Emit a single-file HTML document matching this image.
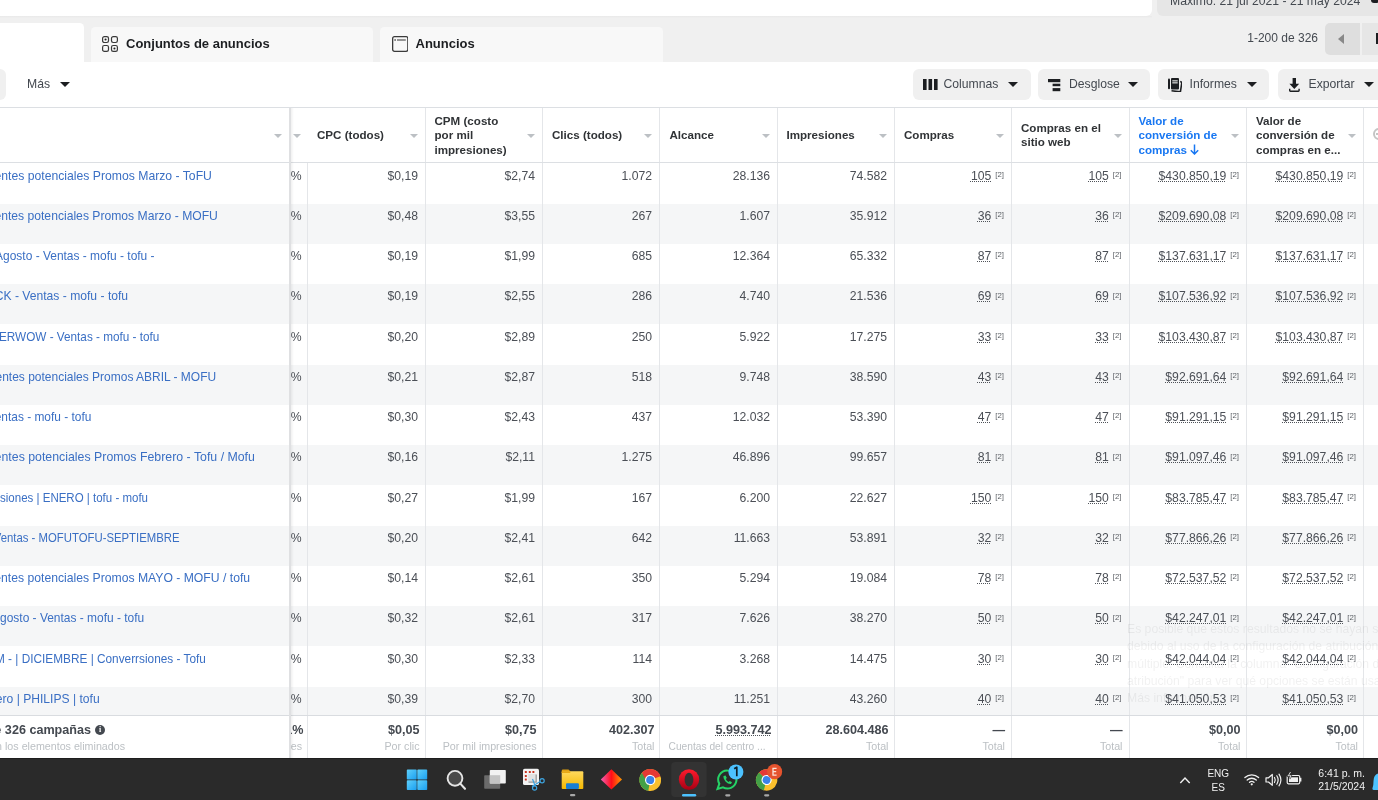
<!DOCTYPE html><html><head><meta charset="utf-8"><style>
*{box-sizing:border-box;margin:0;padding:0}
html,body{width:1378px;height:800px;overflow:hidden}
body{position:relative;background:#f0f0f0;font-family:"Liberation Sans",sans-serif;color:#1c1e21}
.a{position:absolute;white-space:nowrap}
.ln{position:absolute;width:1px;background:#e4e6e9}
.hl{position:absolute;height:1px;background:#dcdfe3;left:0;width:1378px}
.row{position:absolute;left:0;width:1378px}
.t{position:absolute;white-space:nowrap;font-size:12.2px;line-height:14px;color:#4b4f56}
.r{text-align:right}
.nm{color:#3a6fc4}
.u{text-decoration:underline dotted #50545a;text-underline-offset:0.6px;text-decoration-thickness:1px}
.sup{font-size:7.8px;color:#5c6066;margin-left:4px;position:relative;top:-2.8px}
.hd{position:absolute;white-space:nowrap;font-size:11.6px;line-height:14.3px;font-weight:bold;color:#303336}
.car{position:absolute;width:0;height:0;border-left:4px solid transparent;border-right:4px solid transparent;border-top:4.5px solid #bcc0c4}
.btn{position:absolute;top:69px;height:31px;background:#f0f0f0;border-radius:6px}
.bt{position:absolute;top:0;line-height:31px;font-size:12.2px;color:#444950}
.bc{position:absolute;width:0;height:0;border-left:5px solid transparent;border-right:5px solid transparent;border-top:5.5px solid #1c1e21;top:82px}
.ft{position:absolute;white-space:nowrap;text-align:right;font-weight:bold;font-size:12.6px;color:#444950}
.fs{position:absolute;white-space:nowrap;text-align:right;font-size:10.7px;color:#bcc0c4}
</style></head><body><div id="root" style="position:absolute;left:0;top:0;width:1378px;height:800px;overflow:hidden;filter:blur(0.3px)">
<div class="a" style="left:0;top:0;width:1152px;height:16px;background:#fff;border-bottom-right-radius:6px"></div>
<div class="a" style="left:1157px;top:-12px;width:240px;height:28px;background:#e6e6e6;border-radius:6px"></div>
<div class="a" style="left:1170px;top:-6.5px;font-size:12.2px;line-height:14px;color:#444950">Máximo: 21 jul 2021 - 21 may 2024</div>
<div class="a" style="left:1371px;top:-3px;width:8px;height:6px;background:#1c1e21;border-radius:3px"></div>
<div class="a" style="left:0;top:16px;width:1152px;height:2px;background:linear-gradient(#e9e9e9,#f0f0f0)"></div>
<div class="a" style="left:-10px;top:23px;width:94px;height:40px;background:#fff;border-top-right-radius:4.5px"></div>
<div class="a" style="left:91px;top:27px;width:282px;height:36px;background:#f8f8f8;border-top-left-radius:4.5px;border-top-right-radius:4.5px"></div>
<div class="a" style="left:380px;top:27px;width:283px;height:36px;background:#f8f8f8;border-top-left-radius:4.5px;border-top-right-radius:4.5px"></div>
<svg class="a" style="left:102px;top:36px" width="16" height="16" viewBox="0 0 16 16">
<g fill="none" stroke="#3a3a3a" stroke-width="1.2">
<rect x="0.6" y="0.6" width="5.9" height="5.9" rx="1.7"/><rect x="9.5" y="0.6" width="5.9" height="5.9" rx="1.7"/>
<rect x="0.6" y="9.5" width="5.9" height="5.9" rx="1.7"/><rect x="9.5" y="9.5" width="5.9" height="5.9" rx="1.7"/></g>
<circle cx="3.55" cy="3.55" r="1.05" fill="#222"/><circle cx="12.45" cy="12.45" r="1.05" fill="#222"/></svg>
<div class="a" style="left:126px;top:36px;font-size:13px;line-height:16px;font-weight:bold;color:#1c1e21">Conjuntos de anuncios</div>
<svg class="a" style="left:391.5px;top:36px" width="16.5" height="16" viewBox="0 0 16.5 16">
<rect x="0.65" y="0.65" width="15.2" height="14.7" rx="1.8" fill="none" stroke="#3a3a3a" stroke-width="1.3"/>
<rect x="2.4" y="3.3" width="1.4" height="1.4" fill="#333"/><rect x="5" y="3.4" width="8.8" height="1.2" fill="#555"/></svg>
<div class="a" style="left:415.5px;top:36px;font-size:13px;line-height:16px;font-weight:bold;color:#1c1e21">Anuncios</div>
<div class="a" style="left:1200px;width:118px;text-align:right;top:31px;font-size:12px;line-height:14px;color:#444950">1-200 de 326</div>
<div class="a" style="left:1324.5px;top:23px;width:35px;height:31.5px;background:#dedede;border-radius:5px 0 0 5px"></div>
<div class="a" style="left:1338px;top:34px;width:0;height:0;border-top:5px solid transparent;border-bottom:5px solid transparent;border-right:6px solid #888"></div>
<div class="a" style="left:1361.5px;top:23px;width:30px;height:31.5px;background:#e6e6e6"></div>
<div class="a" style="left:1376px;top:33px;width:4px;height:11px;background:#1c1e21"></div>
<div class="a" style="left:0;top:62px;width:1378px;height:697px;background:#fff"></div>
<div class="a" style="left:-20px;top:69px;width:26px;height:31px;background:#f0f0f0;border-radius:6px"></div>
<div class="a" style="left:27px;top:69px;line-height:31px;font-size:12.2px;color:#444950">Más</div>
<div class="bc" style="left:60px"></div>
<div class="btn" style="left:912.5px;width:118px"></div>
<svg class="a" style="left:922.5px;top:79px" width="15" height="11" viewBox="0 0 15 11"><rect x="0" y="0" width="3.6" height="11" fill="#1c1e21"/><rect x="5.5" y="0" width="3.6" height="11" fill="#1c1e21"/><rect x="11" y="0" width="3.6" height="11" fill="#1c1e21"/></svg>
<div class="a bt" style="left:943.5px;top:69px">Columnas</div>
<div class="bc" style="left:1008px"></div>
<div class="btn" style="left:1038px;width:111.5px"></div>
<svg class="a" style="left:1048px;top:78.5px" width="13" height="13" viewBox="0 0 13 13"><rect x="0" y="0" width="12.3" height="3.2" fill="#1c1e21"/><rect x="4.6" y="4.7" width="7.7" height="2.5" fill="#1c1e21"/><rect x="4.6" y="9.1" width="7.7" height="3.1" fill="#1c1e21"/></svg>
<div class="a bt" style="left:1069px;top:69px">Desglose</div>
<div class="bc" style="left:1128px"></div>
<div class="btn" style="left:1158px;width:110.5px"></div>
<svg class="a" style="left:1168px;top:77.5px" width="14" height="14.5" viewBox="0 0 14 14.5"><rect x="0" y="0.6" width="2" height="10.6" rx="1" fill="#1c1e21"/><rect x="3" y="0" width="8" height="11.6" rx="1" fill="#1c1e21"/><rect x="4.3" y="2.3" width="5.4" height="1.1" fill="#f0f0f0"/><rect x="4.3" y="4.3" width="5.4" height="1.1" fill="#f0f0f0"/><path d="M12.2 3.5 L13.9 4.2 L12.4 13.8 L3.5 12.8" fill="none" stroke="#1c1e21" stroke-width="1.6"/></svg>
<div class="a bt" style="left:1189.5px;top:69px">Informes</div>
<div class="bc" style="left:1247px"></div>
<div class="btn" style="left:1277.5px;width:130px"></div>
<svg class="a" style="left:1289px;top:78px" width="11" height="14" viewBox="0 0 11 14"><path d="M3.6 0 H7 V5.8 H10.2 L5.3 11 L0.4 5.8 H3.6 Z" fill="#1c1e21"/><path d="M0.7 10.8 V12.5 Q0.7 13.2 1.4 13.2 H9.4 Q10.1 13.2 10.1 12.5 V10.8" fill="none" stroke="#1c1e21" stroke-width="1.4"/></svg>
<div class="a bt" style="left:1308.5px;top:69px">Exportar</div>
<div class="bc" style="left:1363.5px"></div>
<div class="hl" style="top:107px"></div>
<div class="hl" style="top:162px"></div>
<div class="ln" style="left:425px;top:108px;height:54px"></div>
<div class="ln" style="left:542px;top:108px;height:54px"></div>
<div class="ln" style="left:659px;top:108px;height:54px"></div>
<div class="ln" style="left:777px;top:108px;height:54px"></div>
<div class="ln" style="left:894px;top:108px;height:54px"></div>
<div class="ln" style="left:1011px;top:108px;height:54px"></div>
<div class="ln" style="left:1129px;top:108px;height:54px"></div>
<div class="ln" style="left:1246px;top:108px;height:54px"></div>
<div class="ln" style="left:1363px;top:108px;height:54px"></div>
<div class="car" style="left:273.5px;top:133.5px"></div>
<div class="car" style="left:293px;top:133.5px"></div>
<div class="car" style="left:409.5px;top:133.5px"></div>
<div class="car" style="left:526.5px;top:133.5px"></div>
<div class="car" style="left:643.5px;top:133.5px"></div>
<div class="car" style="left:761.5px;top:133.5px"></div>
<div class="car" style="left:878.5px;top:133.5px"></div>
<div class="car" style="left:995.5px;top:133.5px"></div>
<div class="car" style="left:1113.5px;top:133.5px"></div>
<div class="car" style="left:1230.5px;top:133.5px"></div>
<div class="car" style="left:1347.5px;top:133.5px"></div>
<div class="hd" style="left:317px;top:128.35px">CPC (todos)</div>
<div class="hd" style="left:434.5px;top:114.05px">CPM (costo<br>por mil<br>impresiones)</div>
<div class="hd" style="left:552px;top:128.35px">Clics (todos)</div>
<div class="hd" style="left:669.5px;top:128.35px">Alcance</div>
<div class="hd" style="left:786.5px;top:128.35px">Impresiones</div>
<div class="hd" style="left:904px;top:128.35px">Compras</div>
<div class="hd" style="left:1021px;top:121.2px">Compras en el<br>sitio web</div>
<div class="hd" style="left:1138.5px;top:114.05px;color:#1877f2">Valor de<br>conversión de<br>compras <svg width="9" height="11" viewBox="0 0 9 11" style="vertical-align:-1px"><path d="M4.5 0.5 V10 M0.8 6.3 L4.5 10 L8.2 6.3" fill="none" stroke="#1877f2" stroke-width="1.5"/></svg></div>
<div class="hd" style="left:1256px;top:114.05px">Valor de<br>conversión de<br>compras en e...</div>
<div class="a" style="left:1373px;top:128px;width:12px;height:12px;border:2px solid #c4c4c4;border-radius:50%"></div><div class="a" style="left:1376px;top:133px;width:6px;height:2px;background:#c4c4c4"></div>
<div class="row" style="top:163.3px;height:40.25px;background:#fff"></div>
<div class="row" style="top:203.55px;height:40.25px;background:#f5f6f7"></div>
<div class="row" style="top:243.8px;height:40.25px;background:#fff"></div>
<div class="row" style="top:284.05px;height:40.25px;background:#f5f6f7"></div>
<div class="row" style="top:324.3px;height:40.25px;background:#fff"></div>
<div class="row" style="top:364.55px;height:40.25px;background:#f5f6f7"></div>
<div class="row" style="top:404.8px;height:40.25px;background:#fff"></div>
<div class="row" style="top:445.05px;height:40.25px;background:#f5f6f7"></div>
<div class="row" style="top:485.3px;height:40.25px;background:#fff"></div>
<div class="row" style="top:525.55px;height:40.25px;background:#f5f6f7"></div>
<div class="row" style="top:565.8px;height:40.25px;background:#fff"></div>
<div class="row" style="top:606.05px;height:40.25px;background:#f5f6f7"></div>
<div class="row" style="top:646.3px;height:40.25px;background:#fff"></div>
<div class="row" style="top:686.55px;height:28.450000000000045px;background:#f5f6f7"></div>
<div class="ln" style="left:307px;top:163px;height:552px"></div>
<div class="ln" style="left:425px;top:163px;height:596px"></div>
<div class="ln" style="left:542px;top:163px;height:596px"></div>
<div class="ln" style="left:659px;top:163px;height:596px"></div>
<div class="ln" style="left:777px;top:163px;height:596px"></div>
<div class="ln" style="left:894px;top:163px;height:596px"></div>
<div class="ln" style="left:1011px;top:163px;height:596px"></div>
<div class="ln" style="left:1129px;top:163px;height:596px"></div>
<div class="ln" style="left:1246px;top:163px;height:596px"></div>
<div class="ln" style="left:1363px;top:163px;height:596px"></div>
<div class="t nm" style="right:1166.10px;top:168.70000000000002px;transform:scaleX(1.001);transform-origin:right center">ientes potenciales Promos Marzo - ToFU</div>
<div class="a" style="left:291px;width:16px;top:163.3px;height:30px;overflow:hidden"><div class="t" style="right:5.5px;top:5.4px">4%</div></div>
<div class="t r" style="right:960px;top:168.70000000000002px">$0,19</div>
<div class="t r" style="right:843px;top:168.70000000000002px">$2,74</div>
<div class="t r" style="right:726px;top:168.70000000000002px">1.072</div>
<div class="t r" style="right:608px;top:168.70000000000002px">28.136</div>
<div class="t r" style="right:491px;top:168.70000000000002px">74.582</div>
<div class="t r" style="right:374px;top:168.70000000000002px"><span class="u">105</span><span class="sup">[2]</span></div>
<div class="t r" style="right:256.5px;top:168.70000000000002px"><span class="u">105</span><span class="sup">[2]</span></div>
<div class="t r" style="right:139px;top:168.70000000000002px"><span class="u">$430.850,19</span><span class="sup">[2]</span></div>
<div class="t r" style="right:22px;top:168.70000000000002px"><span class="u">$430.850,19</span><span class="sup">[2]</span></div>
<div class="t nm" style="right:1160.10px;top:208.95000000000002px;transform:scaleX(0.997);transform-origin:right center">ientes potenciales Promos Marzo - MOFU</div>
<div class="a" style="left:291px;width:16px;top:203.55px;height:30px;overflow:hidden"><div class="t" style="right:5.5px;top:5.4px">4%</div></div>
<div class="t r" style="right:960px;top:208.95000000000002px">$0,48</div>
<div class="t r" style="right:843px;top:208.95000000000002px">$3,55</div>
<div class="t r" style="right:726px;top:208.95000000000002px">267</div>
<div class="t r" style="right:608px;top:208.95000000000002px">1.607</div>
<div class="t r" style="right:491px;top:208.95000000000002px">35.912</div>
<div class="t r" style="right:374px;top:208.95000000000002px"><span class="u">36</span><span class="sup">[2]</span></div>
<div class="t r" style="right:256.5px;top:208.95000000000002px"><span class="u">36</span><span class="sup">[2]</span></div>
<div class="t r" style="right:139px;top:208.95000000000002px"><span class="u">$209.690,08</span><span class="sup">[2]</span></div>
<div class="t r" style="right:22px;top:208.95000000000002px"><span class="u">$209.690,08</span><span class="sup">[2]</span></div>
<div class="t nm" style="right:1223.14px;top:249.20000000000002px;transform:scaleX(0.981);transform-origin:right center">Agosto - Ventas - mofu - tofu -</div>
<div class="a" style="left:291px;width:16px;top:243.8px;height:30px;overflow:hidden"><div class="t" style="right:5.5px;top:5.4px">5%</div></div>
<div class="t r" style="right:960px;top:249.20000000000002px">$0,19</div>
<div class="t r" style="right:843px;top:249.20000000000002px">$1,99</div>
<div class="t r" style="right:726px;top:249.20000000000002px">685</div>
<div class="t r" style="right:608px;top:249.20000000000002px">12.364</div>
<div class="t r" style="right:491px;top:249.20000000000002px">65.332</div>
<div class="t r" style="right:374px;top:249.20000000000002px"><span class="u">87</span><span class="sup">[2]</span></div>
<div class="t r" style="right:256.5px;top:249.20000000000002px"><span class="u">87</span><span class="sup">[2]</span></div>
<div class="t r" style="right:139px;top:249.20000000000002px"><span class="u">$137.631,17</span><span class="sup">[2]</span></div>
<div class="t r" style="right:22px;top:249.20000000000002px"><span class="u">$137.631,17</span><span class="sup">[2]</span></div>
<div class="t nm" style="right:1249.43px;top:289.45px;transform:scaleX(0.995);transform-origin:right center">CK - Ventas - mofu - tofu</div>
<div class="a" style="left:291px;width:16px;top:284.05px;height:30px;overflow:hidden"><div class="t" style="right:5.5px;top:5.4px">3%</div></div>
<div class="t r" style="right:960px;top:289.45px">$0,19</div>
<div class="t r" style="right:843px;top:289.45px">$2,55</div>
<div class="t r" style="right:726px;top:289.45px">286</div>
<div class="t r" style="right:608px;top:289.45px">4.740</div>
<div class="t r" style="right:491px;top:289.45px">21.536</div>
<div class="t r" style="right:374px;top:289.45px"><span class="u">69</span><span class="sup">[2]</span></div>
<div class="t r" style="right:256.5px;top:289.45px"><span class="u">69</span><span class="sup">[2]</span></div>
<div class="t r" style="right:139px;top:289.45px"><span class="u">$107.536,92</span><span class="sup">[2]</span></div>
<div class="t r" style="right:22px;top:289.45px"><span class="u">$107.536,92</span><span class="sup">[2]</span></div>
<div class="t nm" style="right:1218.95px;top:329.7px;transform:scaleX(0.964);transform-origin:right center">OWERWOW - Ventas - mofu - tofu</div>
<div class="a" style="left:291px;width:16px;top:324.3px;height:30px;overflow:hidden"><div class="t" style="right:5.5px;top:5.4px">5%</div></div>
<div class="t r" style="right:960px;top:329.7px">$0,20</div>
<div class="t r" style="right:843px;top:329.7px">$2,89</div>
<div class="t r" style="right:726px;top:329.7px">250</div>
<div class="t r" style="right:608px;top:329.7px">5.922</div>
<div class="t r" style="right:491px;top:329.7px">17.275</div>
<div class="t r" style="right:374px;top:329.7px"><span class="u">33</span><span class="sup">[2]</span></div>
<div class="t r" style="right:256.5px;top:329.7px"><span class="u">33</span><span class="sup">[2]</span></div>
<div class="t r" style="right:139px;top:329.7px"><span class="u">$103.430,87</span><span class="sup">[2]</span></div>
<div class="t r" style="right:22px;top:329.7px"><span class="u">$103.430,87</span><span class="sup">[2]</span></div>
<div class="t nm" style="right:1161.91px;top:369.95px;transform:scaleX(0.983);transform-origin:right center">ientes potenciales Promos ABRIL - MOFU</div>
<div class="a" style="left:291px;width:16px;top:364.55px;height:30px;overflow:hidden"><div class="t" style="right:5.5px;top:5.4px">3%</div></div>
<div class="t r" style="right:960px;top:369.95px">$0,21</div>
<div class="t r" style="right:843px;top:369.95px">$2,87</div>
<div class="t r" style="right:726px;top:369.95px">518</div>
<div class="t r" style="right:608px;top:369.95px">9.748</div>
<div class="t r" style="right:491px;top:369.95px">38.590</div>
<div class="t r" style="right:374px;top:369.95px"><span class="u">43</span><span class="sup">[2]</span></div>
<div class="t r" style="right:256.5px;top:369.95px"><span class="u">43</span><span class="sup">[2]</span></div>
<div class="t r" style="right:139px;top:369.95px"><span class="u">$92.691,64</span><span class="sup">[2]</span></div>
<div class="t r" style="right:22px;top:369.95px"><span class="u">$92.691,64</span><span class="sup">[2]</span></div>
<div class="t nm" style="right:1286.94px;top:410.2px;transform:scaleX(0.977);transform-origin:right center">Ventas - mofu - tofu</div>
<div class="a" style="left:291px;width:16px;top:404.8px;height:30px;overflow:hidden"><div class="t" style="right:5.5px;top:5.4px">2%</div></div>
<div class="t r" style="right:960px;top:410.2px">$0,30</div>
<div class="t r" style="right:843px;top:410.2px">$2,43</div>
<div class="t r" style="right:726px;top:410.2px">437</div>
<div class="t r" style="right:608px;top:410.2px">12.032</div>
<div class="t r" style="right:491px;top:410.2px">53.390</div>
<div class="t r" style="right:374px;top:410.2px"><span class="u">47</span><span class="sup">[2]</span></div>
<div class="t r" style="right:256.5px;top:410.2px"><span class="u">47</span><span class="sup">[2]</span></div>
<div class="t r" style="right:139px;top:410.2px"><span class="u">$91.291,15</span><span class="sup">[2]</span></div>
<div class="t r" style="right:22px;top:410.2px"><span class="u">$91.291,15</span><span class="sup">[2]</span></div>
<div class="t nm" style="right:1123.31px;top:450.45px;transform:scaleX(1.012);transform-origin:right center">ientes potenciales Promos Febrero - Tofu / Mofu</div>
<div class="a" style="left:291px;width:16px;top:445.05px;height:30px;overflow:hidden"><div class="t" style="right:5.5px;top:5.4px">3%</div></div>
<div class="t r" style="right:960px;top:450.45px">$0,16</div>
<div class="t r" style="right:843px;top:450.45px">$2,11</div>
<div class="t r" style="right:726px;top:450.45px">1.275</div>
<div class="t r" style="right:608px;top:450.45px">46.896</div>
<div class="t r" style="right:491px;top:450.45px">99.657</div>
<div class="t r" style="right:374px;top:450.45px"><span class="u">81</span><span class="sup">[2]</span></div>
<div class="t r" style="right:256.5px;top:450.45px"><span class="u">81</span><span class="sup">[2]</span></div>
<div class="t r" style="right:139px;top:450.45px"><span class="u">$91.097,46</span><span class="sup">[2]</span></div>
<div class="t r" style="right:22px;top:450.45px"><span class="u">$91.097,46</span><span class="sup">[2]</span></div>
<div class="t nm" style="right:1230.17px;top:490.7px;transform:scaleX(0.944);transform-origin:right center">Conversiones | ENERO | tofu - mofu</div>
<div class="a" style="left:291px;width:16px;top:485.3px;height:30px;overflow:hidden"><div class="t" style="right:5.5px;top:5.4px">4%</div></div>
<div class="t r" style="right:960px;top:490.7px">$0,27</div>
<div class="t r" style="right:843px;top:490.7px">$1,99</div>
<div class="t r" style="right:726px;top:490.7px">167</div>
<div class="t r" style="right:608px;top:490.7px">6.200</div>
<div class="t r" style="right:491px;top:490.7px">22.627</div>
<div class="t r" style="right:374px;top:490.7px"><span class="u">150</span><span class="sup">[2]</span></div>
<div class="t r" style="right:256.5px;top:490.7px"><span class="u">150</span><span class="sup">[2]</span></div>
<div class="t r" style="right:139px;top:490.7px"><span class="u">$83.785,47</span><span class="sup">[2]</span></div>
<div class="t r" style="right:22px;top:490.7px"><span class="u">$83.785,47</span><span class="sup">[2]</span></div>
<div class="t nm" style="right:1198.58px;top:530.9499999999999px;transform:scaleX(0.931);transform-origin:right center">Ventas - MOFUTOFU-SEPTIEMBRE</div>
<div class="a" style="left:291px;width:16px;top:525.55px;height:30px;overflow:hidden"><div class="t" style="right:5.5px;top:5.4px">9%</div></div>
<div class="t r" style="right:960px;top:530.9499999999999px">$0,20</div>
<div class="t r" style="right:843px;top:530.9499999999999px">$2,41</div>
<div class="t r" style="right:726px;top:530.9499999999999px">642</div>
<div class="t r" style="right:608px;top:530.9499999999999px">11.663</div>
<div class="t r" style="right:491px;top:530.9499999999999px">53.891</div>
<div class="t r" style="right:374px;top:530.9499999999999px"><span class="u">32</span><span class="sup">[2]</span></div>
<div class="t r" style="right:256.5px;top:530.9499999999999px"><span class="u">32</span><span class="sup">[2]</span></div>
<div class="t r" style="right:139px;top:530.9499999999999px"><span class="u">$77.866,26</span><span class="sup">[2]</span></div>
<div class="t r" style="right:22px;top:530.9499999999999px"><span class="u">$77.866,26</span><span class="sup">[2]</span></div>
<div class="t nm" style="right:1127.92px;top:571.1999999999999px;transform:scaleX(1.000);transform-origin:right center">ientes potenciales Promos MAYO - MOFU / tofu</div>
<div class="a" style="left:291px;width:16px;top:565.8px;height:30px;overflow:hidden"><div class="t" style="right:5.5px;top:5.4px">3%</div></div>
<div class="t r" style="right:960px;top:571.1999999999999px">$0,14</div>
<div class="t r" style="right:843px;top:571.1999999999999px">$2,61</div>
<div class="t r" style="right:726px;top:571.1999999999999px">350</div>
<div class="t r" style="right:608px;top:571.1999999999999px">5.294</div>
<div class="t r" style="right:491px;top:571.1999999999999px">19.084</div>
<div class="t r" style="right:374px;top:571.1999999999999px"><span class="u">78</span><span class="sup">[2]</span></div>
<div class="t r" style="right:256.5px;top:571.1999999999999px"><span class="u">78</span><span class="sup">[2]</span></div>
<div class="t r" style="right:139px;top:571.1999999999999px"><span class="u">$72.537,52</span><span class="sup">[2]</span></div>
<div class="t r" style="right:22px;top:571.1999999999999px"><span class="u">$72.537,52</span><span class="sup">[2]</span></div>
<div class="t nm" style="right:1233.64px;top:611.4499999999999px;transform:scaleX(0.980);transform-origin:right center">Agosto - Ventas - mofu - tofu</div>
<div class="a" style="left:291px;width:16px;top:606.05px;height:30px;overflow:hidden"><div class="t" style="right:5.5px;top:5.4px">3%</div></div>
<div class="t r" style="right:960px;top:611.4499999999999px">$0,32</div>
<div class="t r" style="right:843px;top:611.4499999999999px">$2,61</div>
<div class="t r" style="right:726px;top:611.4499999999999px">317</div>
<div class="t r" style="right:608px;top:611.4499999999999px">7.626</div>
<div class="t r" style="right:491px;top:611.4499999999999px">38.270</div>
<div class="t r" style="right:374px;top:611.4499999999999px"><span class="u">50</span><span class="sup">[2]</span></div>
<div class="t r" style="right:256.5px;top:611.4499999999999px"><span class="u">50</span><span class="sup">[2]</span></div>
<div class="t r" style="right:139px;top:611.4499999999999px"><span class="u">$42.247,01</span><span class="sup">[2]</span></div>
<div class="t r" style="right:22px;top:611.4499999999999px"><span class="u">$42.247,01</span><span class="sup">[2]</span></div>
<div class="t nm" style="right:1171.75px;top:651.6999999999999px;transform:scaleX(0.970);transform-origin:right center">TM - | DICIEMBRE | Converrsiones - Tofu</div>
<div class="a" style="left:291px;width:16px;top:646.3px;height:30px;overflow:hidden"><div class="t" style="right:5.5px;top:5.4px">9%</div></div>
<div class="t r" style="right:960px;top:651.6999999999999px">$0,30</div>
<div class="t r" style="right:843px;top:651.6999999999999px">$2,33</div>
<div class="t r" style="right:726px;top:651.6999999999999px">114</div>
<div class="t r" style="right:608px;top:651.6999999999999px">3.268</div>
<div class="t r" style="right:491px;top:651.6999999999999px">14.475</div>
<div class="t r" style="right:374px;top:651.6999999999999px"><span class="u">30</span><span class="sup">[2]</span></div>
<div class="t r" style="right:256.5px;top:651.6999999999999px"><span class="u">30</span><span class="sup">[2]</span></div>
<div class="t r" style="right:139px;top:651.6999999999999px"><span class="u">$42.044,04</span><span class="sup">[2]</span></div>
<div class="t r" style="right:22px;top:651.6999999999999px"><span class="u">$42.044,04</span><span class="sup">[2]</span></div>
<div class="t nm" style="right:1278.53px;top:691.9499999999999px;transform:scaleX(0.993);transform-origin:right center">Febrero | PHILIPS | tofu</div>
<div class="a" style="left:291px;width:16px;top:686.55px;height:30px;overflow:hidden"><div class="t" style="right:5.5px;top:5.4px">9%</div></div>
<div class="t r" style="right:960px;top:691.9499999999999px">$0,39</div>
<div class="t r" style="right:843px;top:691.9499999999999px">$2,70</div>
<div class="t r" style="right:726px;top:691.9499999999999px">300</div>
<div class="t r" style="right:608px;top:691.9499999999999px">11.251</div>
<div class="t r" style="right:491px;top:691.9499999999999px">43.260</div>
<div class="t r" style="right:374px;top:691.9499999999999px"><span class="u">40</span><span class="sup">[2]</span></div>
<div class="t r" style="right:256.5px;top:691.9499999999999px"><span class="u">40</span><span class="sup">[2]</span></div>
<div class="t r" style="right:139px;top:691.9499999999999px"><span class="u">$41.050,53</span><span class="sup">[2]</span></div>
<div class="t r" style="right:22px;top:691.9499999999999px"><span class="u">$41.050,53</span><span class="sup">[2]</span></div>
<div class="a" style="left:0;top:715px;width:1378px;height:44px;background:#fff"></div>
<div class="hl" style="top:715px;background:#d9dce0"></div>
<div class="ln" style="left:307px;top:716px;height:43px"></div>
<div class="ln" style="left:425px;top:716px;height:43px"></div>
<div class="ln" style="left:542px;top:716px;height:43px"></div>
<div class="ln" style="left:659px;top:716px;height:43px"></div>
<div class="ln" style="left:777px;top:716px;height:43px"></div>
<div class="ln" style="left:894px;top:716px;height:43px"></div>
<div class="ln" style="left:1011px;top:716px;height:43px"></div>
<div class="ln" style="left:1129px;top:716px;height:43px"></div>
<div class="ln" style="left:1246px;top:716px;height:43px"></div>
<div class="ln" style="left:1363px;top:716px;height:43px"></div>
<div class="ft" style="right:1287px;top:723px;text-align:right">Total de 326 campañas</div>
<div class="a" style="left:95.2px;top:725px;width:10px;height:10px;border-radius:50%;background:#444950;color:#fff;font-size:8px;line-height:10px;text-align:center;font-weight:bold;font-family:'Liberation Serif',serif">i</div>
<div class="fs" style="right:1253px;top:740.3px">No incluyen los elementos eliminados</div>
<div class="a" style="left:291px;width:16px;top:716px;height:43px;overflow:hidden"><div class="ft" style="right:3.5px;top:7px">1%</div><div class="fs" style="right:5px;top:24.3px">impresiones</div></div>
<div class="ft" style="right:958.5px;top:723px">$0,05</div>
<div class="fs" style="right:958.5px;top:740.3px">Por clic</div>
<div class="ft" style="right:841.5px;top:723px">$0,75</div>
<div class="fs" style="right:841.5px;top:740.3px">Por mil impresiones</div>
<div class="ft" style="right:723.5px;top:723px">402.307</div>
<div class="fs" style="right:723.5px;top:740.3px">Total</div>
<div class="ft" style="right:606.5px;top:723px"><span class=u>5.993.742</span></div>
<div class="fs" style="right:612.2px;top:740.3px;transform:scaleX(0.955);transform-origin:right center">Cuentas del centro ...</div>
<div class="ft" style="right:489.5px;top:723px">28.604.486</div>
<div class="fs" style="right:489.5px;top:740.3px">Total</div>
<div class="ft" style="right:373px;top:723px">—</div>
<div class="fs" style="right:373px;top:740.3px">Total</div>
<div class="ft" style="right:255.5px;top:723px">—</div>
<div class="fs" style="right:255.5px;top:740.3px">Total</div>
<div class="ft" style="right:137.5px;top:723px">$0,00</div>
<div class="fs" style="right:137.5px;top:740.3px">Total</div>
<div class="ft" style="right:20px;top:723px">$0,00</div>
<div class="fs" style="right:20px;top:740.3px">Total</div>
<div class="a" style="left:289px;top:108px;width:2px;height:651px;background:#dfe0e2"></div>
<div class="a" style="left:291px;top:108px;width:3px;height:651px;background:linear-gradient(90deg,rgba(0,0,0,0.06),rgba(0,0,0,0))"></div>
<div class="a" style="left:1127px;top:621px;font-size:12.2px;line-height:17.3px;color:#000;opacity:0.055">Es posible que estos resultados no se hayan s<br>debido al uso de la configuración de atribución<br>múltiple. Consulta la columna "Configuración d<br>atribución" para ver qué opciones se están usa<br>Más información</div>
<div class="a" style="left:0;top:758px;width:1378px;height:42px;background:#2a2a2a;border-top:1px solid #1e1e1e"></div>
<svg class="a" style="left:0;top:758px" width="1378" height="42" viewBox="0 758 1378 42">
<defs>
<linearGradient id="wg" x1="0" y1="0" x2="1" y2="1"><stop offset="0" stop-color="#5fd0fb"/><stop offset="1" stop-color="#1a9ff0"/></linearGradient>
<linearGradient id="dg" x1="0" y1="0" x2="1" y2="0"><stop offset="0" stop-color="#f062b8"/><stop offset="0.5" stop-color="#ff0d18"/><stop offset="1" stop-color="#ff9a00"/></linearGradient>
<linearGradient id="og" x1="0" y1="0" x2="0" y2="1"><stop offset="0" stop-color="#ff1b2d"/><stop offset="1" stop-color="#a70014"/></linearGradient>
<linearGradient id="fg" x1="0" y1="0" x2="0" y2="1"><stop offset="0" stop-color="#ffd95e"/><stop offset="1" stop-color="#f5b800"/></linearGradient>
</defs>
<!-- windows -->
<rect x="406.8" y="769.6" width="9.9" height="9.9" rx="0.8" fill="url(#wg)"/>
<rect x="417.3" y="769.6" width="9.9" height="9.9" rx="0.8" fill="url(#wg)"/>
<rect x="406.8" y="780.2" width="9.9" height="9.9" rx="0.8" fill="url(#wg)"/>
<rect x="417.3" y="780.2" width="9.9" height="9.9" rx="0.8" fill="url(#wg)"/>
<!-- search -->
<circle cx="455" cy="778.3" r="7.4" fill="#4a4a4a" stroke="#e6e6e6" stroke-width="1.9"/>
<line x1="460.3" y1="783.6" x2="465" y2="788.8" stroke="#e6e6e6" stroke-width="2.1" stroke-linecap="round"/>
<!-- task view -->
<rect x="484.2" y="775.2" width="16" height="13.5" rx="0.8" fill="#6b6b6b"/>
<rect x="489.8" y="770" width="16" height="13.6" rx="0.8" fill="#f2f2f2"/>
<rect x="489.8" y="775.2" width="10.4" height="8.4" fill="#c4c4c4"/>
<!-- snipping -->
<rect x="523" y="768.8" width="16" height="16.3" rx="1.6" fill="#f3f3f3"/>
<rect x="528.2" y="774" width="8" height="8" fill="#e2e2e2"/>
<path d="M536.2 774.5 V782.2 H528.5" fill="none" stroke="#9a9a9a" stroke-width="1.3"/>
<g fill="#c8321e">
<rect x="524.8" y="771" width="2" height="2" rx="0.5"/><rect x="528.8" y="771" width="2" height="2" rx="0.5"/><rect x="532.4" y="771" width="2" height="2" rx="0.5"/>
<rect x="524.8" y="775" width="2" height="2" rx="0.5"/><rect x="524.8" y="778.4" width="2" height="2" rx="0.5"/>
</g>
<g fill="none" stroke="#3da4e0" stroke-width="1.2">
<path d="M540.2 781.6 L532 786.5"/>
<path d="M535.2 786 L532.5 779"/>
<circle cx="542.1" cy="780.8" r="2.1"/>
<circle cx="534.6" cy="788" r="2.1"/>
</g>
<!-- folder -->
<path d="M561.7 771 Q561.7 769.6 563 769.6 H568.5 L570.5 771.6 H561.7 Z" fill="#e0a010"/>
<rect x="561.7" y="771.2" width="21.6" height="17.9" rx="1" fill="url(#fg)"/>
<rect x="561.7" y="771.2" width="8.6" height="1.8" fill="#e8a915"/>
<rect x="566" y="783.2" width="12.9" height="5.9" rx="1" fill="#1a7fd4"/>
<rect x="570" y="794" width="5.3" height="2.3" rx="1.1" fill="#a8a8a8"/>
<!-- diamond -->
<path d="M611.4 769.2 L622 779.4 L611.4 789.5 L600.8 779.4 Z" fill="url(#dg)"/>
<!-- chrome -->
<g transform="translate(650.2 780) rotate(10)">
<circle r="10.9" fill="#fbc02d"/>
<path d="M0 0 L-9.44 -5.45 A10.9 10.9 0 0 1 9.44 -5.45 Z" fill="#e53935"/>
<path d="M0 0 L-9.44 -5.45 A10.9 10.9 0 0 0 0 10.9 Z" fill="#43a047"/>
<path d="M-4.6 0 L-9.44 -5.45 L-1 -2.5 Z" fill="#e53935"/>
<circle r="5.2" fill="#fff"/><circle r="4" fill="#3b82e8"/>
</g>
<!-- opera -->
<rect x="671.2" y="762" width="35.4" height="34.9" rx="4" fill="#333333"/>
<ellipse cx="689" cy="779.6" rx="10.2" ry="10.3" fill="url(#og)"/>
<ellipse cx="689" cy="779.7" rx="4.4" ry="6.9" fill="#333333"/>
<rect x="682" y="794" width="14.2" height="2.4" rx="1.2" fill="#4cc2ff"/>
<!-- whatsapp -->
<path d="M727.5 770.5 A9 9 0 1 1 723 787.3 L717.5 789 L719.3 783.8 A9 9 0 0 1 727.5 770.5 Z" fill="none" stroke="#25d366" stroke-width="2"/>
<path d="M723.5 776 Q723 778 725.5 781.5 Q728.5 784.5 731 784 L732 782.3 L729.8 781 L728.6 782 Q726.5 780.8 725.8 779 L726.8 777.9 L725.6 775.5 Z" fill="#25d366"/>
<circle cx="735.9" cy="771.9" r="7.5" fill="#4cc2ff"/>
<path d="M734.2 768.8 L736.8 767.2 V776.2" fill="none" stroke="#10202a" stroke-width="1.7" stroke-linejoin="round"/>
<rect x="725.2" y="794.2" width="5.2" height="2.2" rx="1.1" fill="#a8a8a8"/>
<!-- chrome 2 -->
<g transform="translate(766.6 780) rotate(15)">
<circle r="10.7" fill="#fbc02d"/>
<path d="M0 0 L-9.27 -5.35 A10.7 10.7 0 0 1 9.27 -5.35 Z" fill="#e53935"/>
<path d="M0 0 L-9.27 -5.35 A10.7 10.7 0 0 0 0 10.7 Z" fill="#43a047"/>
<circle r="5.1" fill="#fff"/><circle r="3.9" fill="#3b82e8"/>
</g>
<circle cx="774.6" cy="771.7" r="7.6" fill="#e5532e"/>
<path d="M776.6 768.3 H773 V775.2 H776.6 M773 771.7 H776.2" fill="none" stroke="#fbe3d8" stroke-width="1.3"/>
<rect x="764.1" y="794.2" width="5.2" height="2.2" rx="1.1" fill="#a8a8a8"/>
<!-- tray caret -->
<path d="M1180.3 783 L1185 778 L1189.7 783" fill="none" stroke="#f0f0f0" stroke-width="1.4"/>
<text x="1218.3" y="777.2" font-family="Liberation Sans" font-size="10" fill="#f0f0f0" text-anchor="middle">ENG</text>
<text x="1218.2" y="790.9" font-family="Liberation Sans" font-size="10" fill="#f0f0f0" text-anchor="middle">ES</text>
<!-- wifi -->
<g fill="none" stroke="#f0f0f0" stroke-width="1.3" stroke-linecap="round">
<path d="M1244.9 777.5 A10 10 0 0 1 1258.6 777.5"/>
<path d="M1247.2 780 A6.8 6.8 0 0 1 1256.3 780"/>
<path d="M1249.5 782.3 A3.6 3.6 0 0 1 1254 782.3"/>
</g>
<circle cx="1251.75" cy="784.3" r="1.1" fill="#f0f0f0"/>
<!-- volume -->
<path d="M1266 777.8 H1268.5 L1272.3 774.5 V785.3 L1268.5 782 H1266 Z" fill="none" stroke="#f0f0f0" stroke-width="1.2" stroke-linejoin="round"/>
<g fill="none" stroke="#f0f0f0" stroke-width="1.2" stroke-linecap="round">
<path d="M1274.5 777.5 Q1276 780 1274.5 782.5"/>
<path d="M1276.8 775.8 Q1279.5 780 1276.8 784.2"/>
<path d="M1279 774.2 Q1282.8 780 1279 785.8"/>
</g>
<!-- battery -->
<rect x="1287.2" y="775.5" width="12.5" height="8.3" rx="1.2" fill="none" stroke="#f0f0f0" stroke-width="1.2"/>
<rect x="1299.9" y="777.8" width="1.5" height="3.7" fill="#f0f0f0"/>
<rect x="1289" y="777.3" width="9" height="4.7" fill="#f0f0f0"/>
<path d="M1290.5 771.8 L1288 776 L1291 776 L1289.5 779" fill="none" stroke="#2a2a2a" stroke-width="1.6"/>
<path d="M1290.5 772 L1288.3 775.8 L1291 775.8 L1289.5 778.8" fill="none" stroke="#f0f0f0" stroke-width="0.9"/>
<!-- time -->
<text x="1365" y="776.5" font-family="Liberation Sans" font-size="10.5" fill="#f0f0f0" text-anchor="end">6:41 p. m.</text>
<text x="1365" y="790.2" font-family="Liberation Sans" font-size="10.5" fill="#f0f0f0" text-anchor="end">21/5/2024</text>
<!-- bell -->
<path d="M1374 790 Q1372 790 1372.5 788 Q1373.5 786 1373.5 781 Q1373.5 774 1380 773 V790 Z" fill="#4cc2ff"/>
</svg>

</div></body></html>
